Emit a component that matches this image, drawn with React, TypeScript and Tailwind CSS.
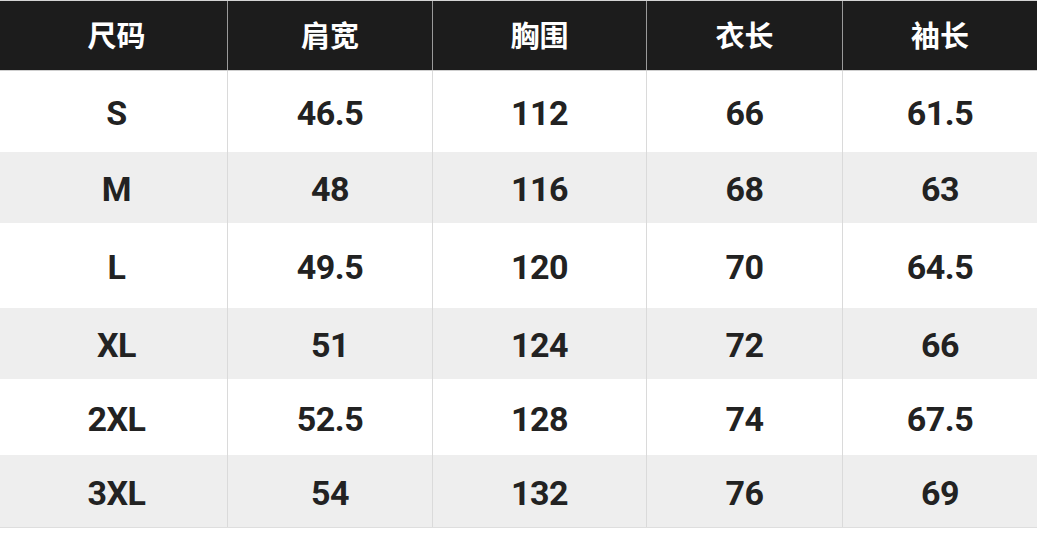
const headers = ['尺码', '肩宽', '胸围', '衣长', '袖长'];

const rows: { cells: string[]; h: string; gray: boolean }[] = [
  { cells: ['S', '46.5', '112', '66', '61.5'], h: 'h-[81px]', gray: false },
  { cells: ['M', '48', '116', '68', '63'], h: 'h-[71px]', gray: true },
  { cells: ['L', '49.5', '120', '70', '64.5'], h: 'h-[85px]', gray: false },
  { cells: ['XL', '51', '124', '72', '66'], h: 'h-[71px]', gray: true },
  { cells: ['2XL', '52.5', '128', '74', '67.5'], h: 'h-[76px]', gray: false },
  { cells: ['3XL', '54', '132', '76', '69'], h: 'h-[72px]', gray: true },
];

const widths = ['w-[227px]', 'w-[205px]', 'w-[214px]', 'w-[196px]', 'flex-1'];

export default function App() {
  return (
    <div className="w-[1037px] h-[539px] bg-white overflow-hidden border-t border-[#d4d4d4]">
      {/* Header */}
      <div className="flex h-[70px] bg-[#1c1c1c] border-b border-[#cfcfcf]">
        {headers.map((t, i) => (
          <div
            key={t}
            className={`${widths[i]} flex items-center justify-center text-white text-[29px] font-bold ${i > 0 ? 'border-l border-[#9a9a9a]' : ''} ${i === 0 ? 'pl-[6px]' : ''}`}
            style={{ fontFamily: '"Noto Sans CJK SC", sans-serif' }}
          >
            <span className="-mt-[2px]">{t}</span>
          </div>
        ))}
      </div>

      {/* Body */}
      {rows.map((r) => (
        <div key={r.cells[0]} className={`flex ${r.h} ${r.gray ? 'bg-[#eeeeee]' : 'bg-white'}`}>
          {r.cells.map((c, i) => (
            <div
              key={i}
              className={`${widths[i]} flex items-center justify-center text-[#222222] text-[34px] font-bold tracking-[-0.5px] ${i > 0 ? 'border-l border-[#dadada]' : ''} ${i === 0 ? 'pl-[6px]' : ''}`}
              style={{ fontFamily: 'Roboto, "Liberation Sans", sans-serif' }}
            >
              <span className="translate-y-[2px]">{c}</span>
            </div>
          ))}
        </div>
      ))}
      <div className="border-t border-[#dedede]" />
    </div>
  );
}
